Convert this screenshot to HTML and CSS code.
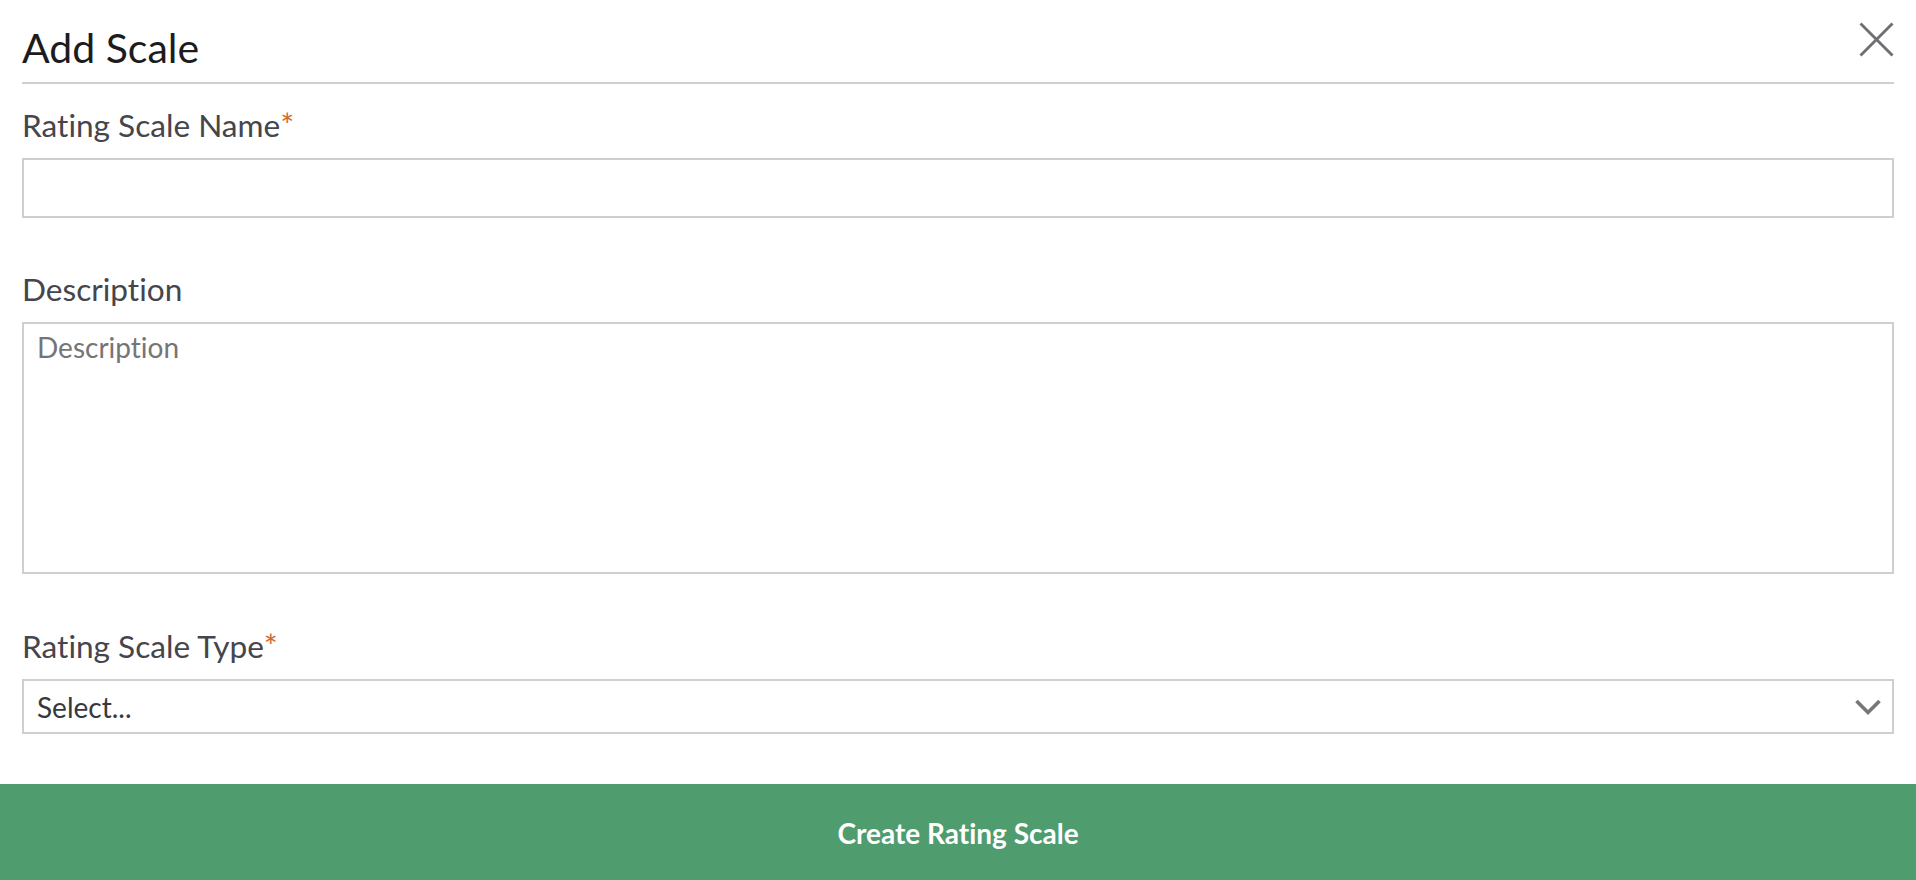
FILE: index.html
```html
<!DOCTYPE html>
<html lang="en">
<head>
    <meta charset="UTF-8">
    <meta name="viewport" content="width=device-width, initial-scale=1.0">
    <title>Add Scale</title>
    <link rel="stylesheet" href="styles.css">
</head>
<body>
    <div class="modal">
        <div class="modal-body">
            <div class="modal-header">
                <h1>Add Scale</h1>
                <button type="button" class="close-btn" aria-label="Close">
                    <svg width="35" height="35" viewBox="0 0 35 35">
                        <line x1="1.5" y1="1.5" x2="33.5" y2="33.5" />
                        <line x1="33.5" y1="1.5" x2="1.5" y2="33.5" />
                    </svg>
                </button>
            </div>

            <form class="scale-form" id="scale-form">
                <div class="field">
                    <label for="scale-name">Rating Scale Name<span class="required">*</span></label>
                    <input type="text" id="scale-name" name="name">
                </div>

                <div class="field">
                    <label for="scale-description">Description</label>
                    <textarea id="scale-description" name="description" placeholder="Description"></textarea>
                </div>

                <div class="field">
                    <label for="scale-type">Rating Scale Type<span class="required">*</span></label>
                    <div class="select-wrap">
                        <select id="scale-type" name="type">
                            <option value="">Select...</option>
                            <option value="numeric">Numeric</option>
                            <option value="text">Text</option>
                        </select>
                        <svg class="chevron" width="28" height="18" viewBox="0 0 28 18">
                            <polyline points="2.5,3 14,14.5 25.5,3" />
                        </svg>
                    </div>
                </div>
            </form>
        </div>

        <button type="submit" form="scale-form" class="submit-btn">Create Rating Scale</button>
    </div>
</body>
</html>
```
FILE: styles.css
```css
body {
    margin: 0;
    font-family: Lato, "Open Sans", sans-serif;
    font-variant-ligatures: none;
    font-feature-settings: "liga" 0, "clig" 0, "dlig" 0, "calt" 0;
    background: #fff;
    color: #45454c;
}

.modal-body {
    padding: 0 22px;
}

.modal-header {
    display: flex;
    justify-content: space-between;
    align-items: flex-start;
    padding: 22px 0 10px;
    border-bottom: 2px solid #cfcfcf;
}

.modal-header h1 {
    margin: 1px 0 0;
    font-size: 41px;
    line-height: 49px;
    font-weight: 400;
    color: #1c1c1e;
}

.close-btn {
    display: block;
    margin: 0;
    padding: 0;
    border: none;
    background: none;
    cursor: pointer;
}

.close-btn svg {
    display: block;
    stroke: #6e6e73;
    stroke-width: 2.8;
}

.scale-form {
    padding-top: 21px;
}

.field {
    margin-bottom: 52px;
}

.field:last-child {
    margin-bottom: 0;
}

.field label {
    display: block;
    font-size: 31.6px;
    line-height: 38px;
    margin-bottom: 14px;
    color: #45454c;
}

.required {
    color: #cf6a30;
    font-size: 33px;
}

.field input,
.field textarea,
.field select {
    display: block;
    width: 100%;
    box-sizing: border-box;
    border: 2px solid #cfcfcf;
    border-radius: 0;
    background: #fff;
    font-family: inherit;
    font-variant-ligatures: none;
    font-feature-settings: "liga" 0, "clig" 0, "dlig" 0, "calt" 0;
    font-size: 28px;
    color: #38383c;
    outline: none;
}

.field input {
    height: 60px;
    padding: 0 13px;
}

.field textarea {
    height: 252px;
    padding: 7px 13px;
    line-height: 1.2;
    resize: none;
}

.field textarea::placeholder {
    color: #757578;
}

.select-wrap {
    position: relative;
}

.field select {
    height: 55px;
    padding: 0 60px 0 13px;
    appearance: none;
    -webkit-appearance: none;
    cursor: pointer;
}

.chevron {
    position: absolute;
    right: 12px;
    top: 50%;
    transform: translateY(-50%);
    fill: none;
    stroke: #777;
    stroke-width: 3.6;
    pointer-events: none;
}

.submit-btn {
    display: block;
    width: 100%;
    margin-top: 50px;
    padding: 33px 0 30px;
    border: none;
    background: #4f9c6f;
    color: #fff;
    font-family: inherit;
    font-variant-ligatures: none;
    font-size: 28px;
    font-weight: 700;
    line-height: 1.2;
    cursor: pointer;
}
```
